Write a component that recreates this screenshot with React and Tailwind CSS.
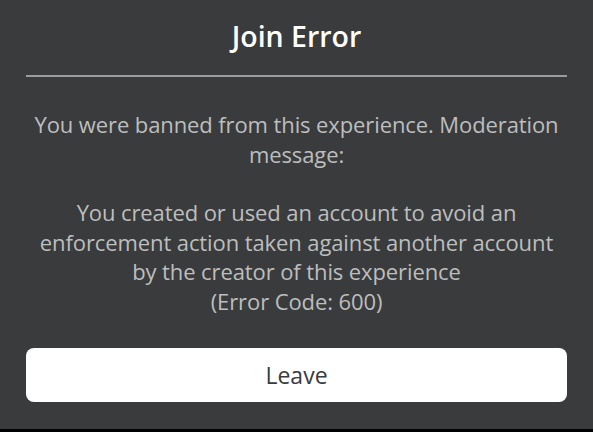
export default function App() {
  return (
    <div className="w-[593px] h-[432px] bg-black" style={{ fontFamily: '"Open Sans", "Noto Sans", sans-serif' }}>
      <div className="h-[429px] bg-[#393b3d] px-[26px] flex flex-col">
        <h1 className="h-[75px] flex items-center justify-center text-white text-[28.5px] font-semibold pb-[2px]">
          Join Error
        </h1>
        <div className="h-[2px] bg-[#9b9c9d]" />
        <div className="pt-[33px] text-center text-[#bdbebe] text-[22px] leading-[29.5px] tracking-[-0.1px]">
          <p>You were banned from this experience. Moderation<br />message:</p>
          <p className="mt-[29px]">
            You created or used an account to avoid an<br />
            enforcement action taken against another account<br />
            by the creator of this experience<br />
            (Error Code: 600)
          </p>
        </div>
        <button className="mt-[32px] h-[54px] w-full bg-white rounded-[8px] text-[#393b3d] text-[23px]">
          Leave
        </button>
      </div>
    </div>
  )
}
